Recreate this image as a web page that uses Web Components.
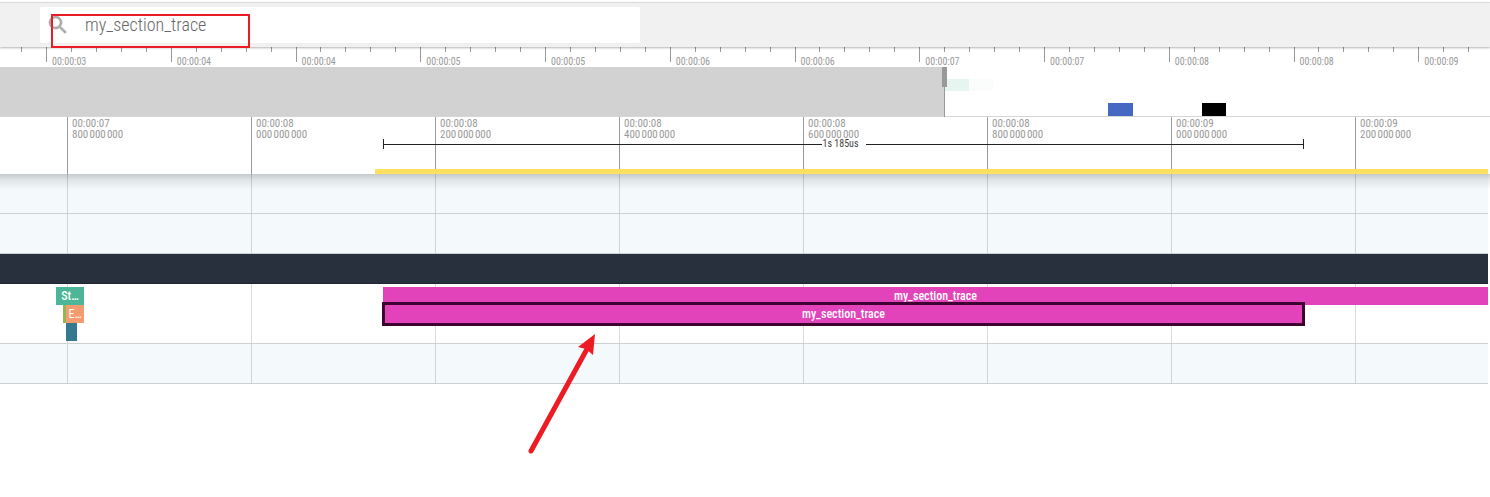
<!DOCTYPE html>
<html lang="en">
<head>
<meta charset="utf-8">
<title>Trace viewer</title>
<style>
html, body { margin: 0; background: #fff; }
body { font-family: "Roboto Condensed", Roboto, sans-serif; }
</style>
</head>
<body>
<trace-app></trace-app>
<script>
function define(name, render) {
  customElements.define(name, class extends HTMLElement {
    constructor() {
      super();
      this.attachShadow({ mode: "open" }).innerHTML = render(this);
    }
  });
}

define("search-bar", () => `
<style>
:host { display: block; margin-top: 2px; padding: 4px 0 4px 40px; background: #f1f1f1; border-top: 1px solid #dcdcdc; box-shadow: 0 1px 2px rgba(0,0,0,.3); }
label { display: flex; box-sizing: border-box; width: 600px; max-width: 90%; height: 36px; padding-left: 6px; background: #fff; border-radius: 2px; }
svg { width: 24px; height: 24px; margin-top: 6px; fill: #aaa; stroke: #aaa; stroke-width: .6; }
input { flex: 1; min-width: 0; height: 36px; box-sizing: border-box; padding: 0 0 0 15px; border: 0; outline: 0; background: none; color: #686868; font: 300 18px/36px "Roboto Condensed", Roboto, sans-serif; }
</style>
<label><svg viewBox="0 0 24 24" aria-hidden="true"><path d="M15.5 14h-.79l-.28-.27C15.41 12.59 16 11.11 16 9.5 16 5.91 13.09 3 9.5 3S3 5.91 3 9.5 5.91 16 9.5 16c1.61 0 3.09-.59 4.23-1.57l.27.28v.79l5 4.99L20.49 19l-4.99-5zm-6 0C7.01 14 5 11.99 5 9.5S7.01 5 9.5 5 14 7.01 14 9.5 11.99 14 9.5 14z"/></svg>
<input type="text" aria-label="Search" value="my_section_trace"></label>`);

define("overview-ruler", () => `
<style>
:host { display: block; overflow: hidden; height: 20px; }
.row { display: flex; padding-left: 21px; margin-right: -53px; }
i { border-left: 1px solid #999; height: 5px; }
.lead { width: 24px; }
.grid { flex: 1; display: grid; grid-template-columns: repeat(12, 1fr); }
.cell { display: grid; grid-template-columns: repeat(5, 1fr); align-items: start; }
.cell i:first-child { height: 15px; }
span { grid-column: 1 / -1; padding-left: 6px; margin-top: -5px; font-size: 10px; line-height: 10px; color: #999; }
</style>
<div class="row"><i class="lead"></i><div class="grid">
${["03","04","04","05","05","06","06","07","07","08","08","09"].map(s => `<div class="cell"><i></i><i></i><i></i><i></i><i></i><span>00:00:${s}</span></div>`).join("")}
</div></div>`);

define("overview-map", () => `
<style>
:host { display: grid; grid-template-columns: 944fr 546fr; height: 49px; border-bottom: 1px solid #d6d6d6; }
.dim { background: #d2d2d2; }
.live { display: grid; grid-template-columns: 25fr 24fr 115fr 25fr 69fr 24fr 264fr; grid-template-rows: 12px 12px 12px 13px; position: relative; }
.live::before { content: ""; position: absolute; left: 0; top: 0; width: 1px; height: 50px; background: #999; }
button { position: absolute; left: -2px; top: 0; width: 5px; height: 20px; padding: 0; border: 0; background: #999; }
.a { grid-area: 2 / 1; background: #e6f5f0; }
.b { grid-area: 2 / 2; background: #fafdfc; }
.c { grid-area: 4 / 4; background: #4568c3; }
.d { grid-area: 4 / 6; background: #000; }
</style>
<div class="dim"></div>
<div class="live"><div class="a"></div><div class="b"></div><div class="c"></div><div class="d"></div><button aria-label="Range start"></button></div>`);

define("time-axis", () => `
<style>
:host { display: block; position: relative; height: 57px; overflow: hidden; background: #fff; }
.cells { display: flex; padding-left: 67px; height: 57px; }
.cells div { flex: none; box-sizing: border-box; width: 184px; padding: 1px 0 0 4px; border-left: 1px solid #999; color: #999; font-size: 11px; line-height: 11px; }
.note { position: absolute; top: 22px; left: 383px; width: 921px; height: 10px; box-sizing: border-box; display: flex; align-items: center; border: solid #222; border-width: 0 1px; color: #444; font-size: 10px; line-height: 10px; }
.note::before, .note::after { content: ""; flex: 1; height: 1px; background: #222; }
.note span { width: 44px; box-sizing: border-box; padding-left: 1px; white-space: nowrap; }
.mark { position: absolute; left: 375px; right: 2px; bottom: 0; height: 5px; background: #ffe060; }
</style>
<div class="cells">
${[["07","800"],["08","000"],["08","200"],["08","400"],["08","600"],["08","800"],["09","000"],["09","200"]].map(([s, n]) => `<div>00:00:${s}<br>${n}&#8202;000&#8202;000</div>`).join("")}
</div>
<div class="note"><span>1s 185us</span></div>
<div class="mark"></div>`);

define("trace-track", () => `
<style>
:host { display: block; box-sizing: border-box; height: 40px; border-bottom: 1px solid #ccd0d2;
  background: linear-gradient(to right, rgba(0,0,0,.15) 1px, transparent 1px) 67px 0 / 184px 100%, #f4f9fc; background-clip: border-box; }
:host([kind="slices"]) { height: 60px; padding-top: 3px; background-color: #fff; }
:host([kind="group"]) { height: 30px; background: #282f3d; border-color: #1e2430; }
</style><slot></slot>`);

define("slice-row", () => `
<style>:host { display: flex; height: 18px; }</style><slot></slot>`);

define("trace-slice", () => `
<style>
:host { display: block; box-sizing: border-box; height: 18px; overflow: hidden; text-align: center; white-space: nowrap; color: #fff; background: var(--fill); font-size: 12px; font-weight: 500; line-height: 19px; }
:host([selected]) { outline: 3px solid #3d0230; position: relative; }
</style><slot></slot>`);

define("callout-box", () => `
<style>:host { position: absolute; left: 51px; top: 14px; width: 199px; height: 34px; box-sizing: border-box; border: 2px solid #ed1c24; pointer-events: none; }</style>`);

define("callout-arrow", () => `
<style>
:host { position: absolute; left: 526px; top: 332px; width: 72px; height: 124px; pointer-events: none; }
svg { display: block; }
</style>
<svg width="72" height="124" viewBox="0 0 72 124" aria-hidden="true"><path d="M5 119 61 17" stroke="#ed1c24" stroke-width="5" stroke-linecap="round"/><path d="M69 2 52 15 60 17 67 23Z" fill="#ed1c24"/></svg>`);

define("trace-app", () => `
<style>
:host { display: block; position: relative; overflow: hidden; }
search-bar { position: relative; }
main { position: relative; padding: 0 2px 113px 0; }
main::before { content: ""; position: absolute; z-index: 1; left: 0; right: 0; top: 0; height: 16px; background: linear-gradient(rgba(0,0,0,.19), rgba(0,0,0,.08) 40%, transparent); }
.start { --fill: #4db598; width: 28px; margin-left: 56px; }
.thin { --fill: #91b84c; width: 3px; margin-left: 63px; }
.exec { --fill: #f49b70; width: 18px; font-weight: 400; }
.leaf { --fill: #36788f; width: 11px; margin-left: 66px; }
.outer { --fill: #e343ba; flex: 1; margin-left: 299px; }
.inner { --fill: #e343ba; width: 917px; margin-left: 301px; }
</style>
<search-bar></search-bar>
<overview-ruler></overview-ruler>
<overview-map></overview-map>
<time-axis></time-axis>
<main>
<trace-track></trace-track>
<trace-track></trace-track>
<trace-track kind="group"></trace-track>
<trace-track kind="slices">
<slice-row><trace-slice class="start">St…</trace-slice><trace-slice class="outer">my_section_trace</trace-slice></slice-row>
<slice-row><trace-slice class="thin"></trace-slice><trace-slice class="exec">E…</trace-slice><trace-slice class="inner" selected>my_section_trace</trace-slice></slice-row>
<slice-row><trace-slice class="leaf"></trace-slice></slice-row>
</trace-track>
<trace-track></trace-track>
</main>
<callout-box></callout-box>
<callout-arrow></callout-arrow>`);
</script>
</body>
</html>
